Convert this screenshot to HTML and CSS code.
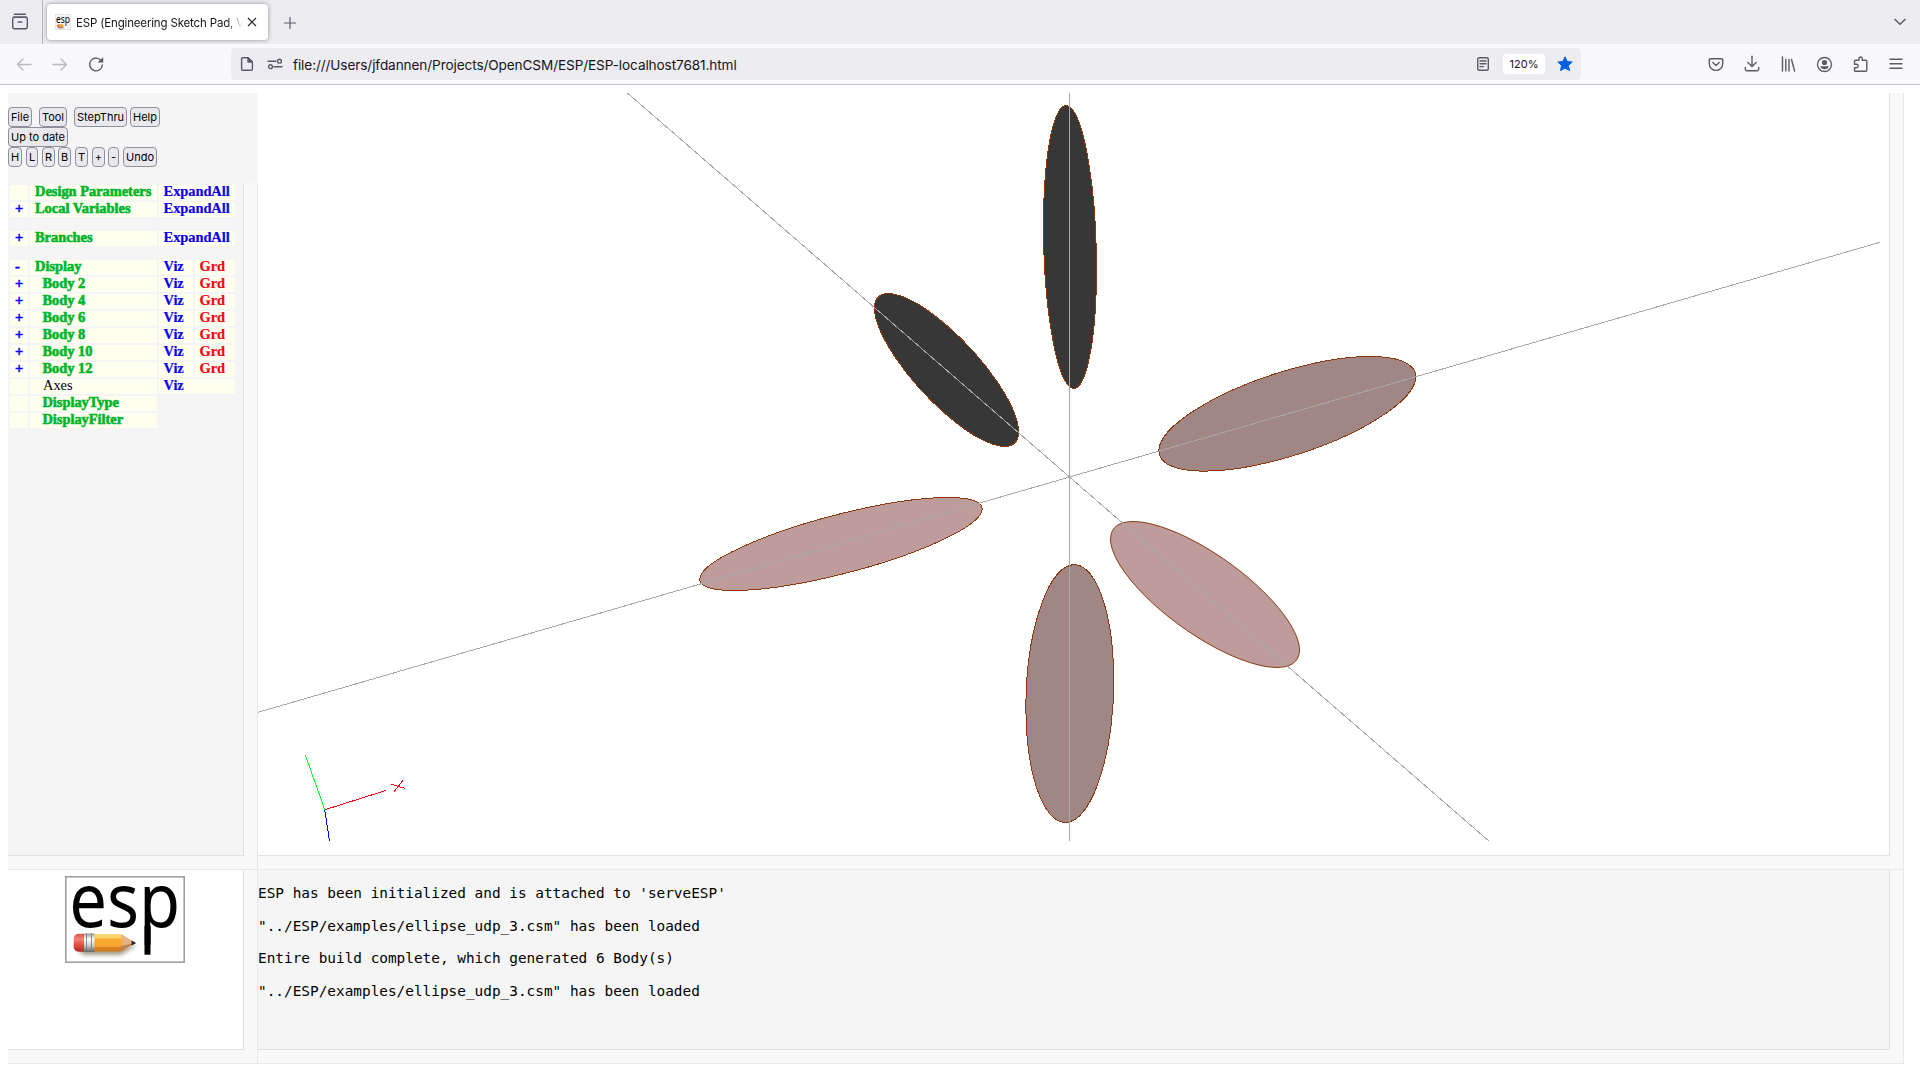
FILE: index.html
```html
<!DOCTYPE html>
<html lang="en">
<head>
<meta charset="utf-8">
<title>ESP (Engineering Sketch Pad, V1)</title>
<link rel="stylesheet" href="styles.css">
</head>
<body>
<header class="chrome">
  <div class="tabstrip">
    <div class="recent">
      <svg width="18" height="18" viewBox="0 0 18 18" class="ico"><path d="M3.4 1.2h11M2.6 4.2h12.8" /><rect x="1.7" y="4.2" width="14.6" height="11.6" rx="2"/><path d="M7.2 9h3.6"/></svg>
    </div>
    <div class="tab">
      <svg class="favicon" width="16" height="16" viewBox="0 0 16 16"><rect x=".5" y=".5" width="15" height="15" fill="#f4f4f4" stroke="#e4e4e4"/><text x="1" y="9" font-size="10.5" textLength="14" lengthAdjust="spacingAndGlyphs" class="logo-text">esp</text><path d="M2 11.8a3 2 0 0 1 2-1.5h3.500l1.500 1.500-1.500 1.700H4a3 2 0 0 1-2-1.700z" fill="#f0a22c"/><path d="M2 11.8a3 2 0 0 1 1.500-1.500v3A3 2 0 0 1 2 11.8z" fill="#e0503c"/><path d="M3 13.800h5.500" stroke="#8d6247"/></svg>
      <span class="tab-title">ESP (Engineering Sketch Pad, V1</span>
      <svg class="close" width="10" height="10" viewBox="0 0 10 10"><path d="M1 1l8 8M9 1L1 9"/></svg>
    </div>
    <svg class="plus" width="12" height="12" viewBox="0 0 12 12"><path d="M6 0v12M0 6h12"/></svg>
    <svg class="chev" width="12" height="8" viewBox="0 0 12 8"><path d="M.5 1L6 6.3 11.5 1"/></svg>
  </div>
  <div class="toolbar">
    <div class="nav">
      <span class="slot faded"><svg width="16" height="16" viewBox="0 0 16 16" class="ico"><path d="M15 8.5H1.5M7 3L1.5 8.5 7 14"/></svg></span>
      <span class="slot faded"><svg width="16" height="16" viewBox="0 0 16 16" class="ico"><path d="M1 8.5h13.500M9 3l5.500 5.500L9 14"/></svg></span>
      <span class="slot"><svg width="16" height="16" viewBox="0 0 16 16" class="ico"><path d="M13.4 5A6.400 6.400 0 1 0 14.400 9"/><path d="M15.200 1v5.600H9.600z" fill="#5b5b66" stroke="none"/></svg></span>
    </div>
    <div class="urlbar">
      <svg width="14" height="16" viewBox="0 0 14 16" class="ico page-ico"><path d="M8 1.700H2.600a1 1 0 0 0-1 1v10.600a1 1 0 0 0 1 1h8.800a1 1 0 0 0 1-1V6z"/><path d="M8 1.700V6h4.400z" fill="#5b5b66"/></svg>
      <svg width="14" height="12" viewBox="0 0 14 12" class="ico perm-ico"><path d="M0 3.200h8M6 8.700h8"/><circle cx="11.500" cy="3.200" r="1.900"/><circle cx="2.500" cy="8.700" r="1.900"/></svg>
      <span class="url">file:///Users/jfdannen/Projects/OpenCSM/ESP/ESP-localhost7681.html</span>
      <svg width="12" height="14" viewBox="0 0 12 14" class="ico reader"><rect x=".7" y=".7" width="10.600" height="12.600" rx="1.500"/><path d="M3 4h6M3 6.800h6M3 9.600h3.500"/></svg>
      <span class="zoom">120%</span>
      <svg width="16" height="16" viewBox="0 0 16 16" class="star"><path d="M8 .8l2.100 4.700 5.100.5-3.800 3.500 1.100 5.100L8 12l-4.500 2.600 1.100-5.100L.8 6l5.100-.5z"/></svg>
    </div>
    <div class="tools">
      <span class="slot"><svg width="16" height="16" viewBox="0 0 16 16" class="ico"><path d="M2.500 2.700h11a1.200 1.200 0 0 1 1.200 1.200v3.800a6.700 6.700 0 0 1-13.400 0V3.900a1.200 1.200 0 0 1 1.200-1.200z"/><path d="M4.800 6.500L8 9.500l3.200-3"/></svg></span>
      <span class="slot"><svg width="16" height="16" viewBox="0 0 16 16" class="ico"><path d="M8 .3v10M3.800 6.500L8 10.500l4.200-4M1.300 11.500v1.700a1.500 1.500 0 0 0 1.500 1.500h10.400a1.500 1.500 0 0 0 1.500-1.500v-1.700"/></svg></span>
      <span class="slot"><svg width="16" height="16" viewBox="0 0 16 16" class="ico"><path d="M2.500 1v14M5.800 3.500V15M9 3.500V15M11.500 3.500L14.600 15"/></svg></span>
      <span class="slot"><svg width="16" height="16" viewBox="0 0 16 16" class="ico"><circle cx="8.500" cy="8.500" r="7"/><circle cx="8.500" cy="6.500" r="2.600" fill="#5b5b66" stroke="none"/><path d="M4.200 10.300h8.600C12.500 12 10.800 13.300 8.500 13.300S4.500 12 4.200 10.300z" fill="#5b5b66" stroke="none"/></svg></span>
      <span class="slot"><svg width="16" height="16" viewBox="0 0 16 16" class="ico"><path d="M7 4.200V2.600a1.600 1.600 0 0 1 3.200 0v1.600h3.600a1 1 0 0 1 1 1v9a1 1 0 0 1-1 1H3.500a1 1 0 0 1-1-1v-2.500h2a1.500 1.500 0 0 0 0-3.400h-2V5.200a1 1 0 0 1 1-1z"/></svg></span>
      <span class="slot"><svg width="12" height="12" viewBox="0 0 12 12" class="ico"><path d="M0 1.300h12M0 5.700h12M0 10.200h12"/></svg></span>
    </div>
  </div>
</header>

<main class="frames">
  <section class="cell tree-cell">
    <div class="menus">
      <div class="brow"><button class="w24">File</button><button class="w28 g7">Tool</button><button class="w53 g7">StepThru</button><button class="w30 g3">Help</button></div>
      <div class="brow"><button class="w60">Up to date</button></div>
      <div class="brow"><button class="w14">H</button><button class="w12 g4">L</button><button class="w13 g4">R</button><button class="w13 g3">B</button><button class="w13 g4">T</button><button class="w13 g4">+</button><button class="w11 g3">-</button><button class="w34 g4">Undo</button></div>
    </div>
    <div class="pane tree">
      <div class="row"><i></i><b>Design Parameters</b><a class="wide">ExpandAll</a></div>
      <div class="row"><i>+</i><b>Local Variables</b><a class="wide">ExpandAll</a></div>
      <div class="row gap"><i>+</i><b>Branches</b><a class="wide">ExpandAll</a></div>
      <div class="row gap"><i>-</i><b>Display</b><a>Viz</a><u>Grd</u></div>
      <div class="row"><i>+</i><b class="in">Body 2</b><a>Viz</a><u>Grd</u></div>
      <div class="row"><i>+</i><b class="in">Body 4</b><a>Viz</a><u>Grd</u></div>
      <div class="row"><i>+</i><b class="in">Body 6</b><a>Viz</a><u>Grd</u></div>
      <div class="row"><i>+</i><b class="in">Body 8</b><a>Viz</a><u>Grd</u></div>
      <div class="row"><i>+</i><b class="in">Body 10</b><a>Viz</a><u>Grd</u></div>
      <div class="row"><i>+</i><b class="in">Body 12</b><a>Viz</a><u>Grd</u></div>
      <div class="row"><i></i><b class="in plain">Axes</b><a class="wide">Viz</a></div>
      <div class="row"><i></i><b class="in">DisplayType</b></div>
      <div class="row"><i></i><b class="in">DisplayFilter</b></div>
    </div>
  </section>

  <section class="cell">
    <div class="pane view">
      <svg class="scene" width="1631" height="762" viewBox="258 93 1631 762">
        <g class="bodies">
          <circle r="1" class="dark" transform="matrix(26.5 21 0 139.930 1070 247)"/>
          <circle r="1" class="mauve" transform="matrix(128.500 -37.100 0 43.670 1287.300 413.800)"/>
          <circle r="1" class="dark" transform="matrix(72 62 0 44.800 946.500 370)"/>
          <circle r="1" class="pink" transform="matrix(141.300 -35.200 0 30.400 841 544)"/>
          <circle r="1" class="mauve" transform="matrix(43.900 -13.300 0 128.200 1069.800 693.600)"/>
          <circle r="1" class="pink" transform="matrix(94.500 55.500 0 47.400 1205 594.500)"/>
        </g>
        <g class="axes">
          <path d="M1069.500 93V841"/>
          <path d="M258 712.300L1069.500 477 1880 242.300"/>
          <path d="M627.500 93L1069.500 477 1488.500 840.700"/>
        </g>
        <g class="triad">
          <path d="M324.700 809.500L305.300 755" stroke="#00ff2b"/>
          <path d="M325 809.700L386 790.400M391.300 784.300L405 788.400M393.500 792.500L403 780.300" stroke="#ff0019"/>
          <path d="M324.700 810L329.500 841" stroke="#0000ff"/>
        </g>
      </svg>
    </div>
  </section>

  <section class="cell">
    <div class="pane logo">
      <svg width="120" height="87" viewBox="0 0 120 87">
        <defs>
          <linearGradient id="wood" x2="0" y2="1"><stop offset="0" stop-color="#fbd66c"/><stop offset=".25" stop-color="#fbd66c"/><stop offset=".26" stop-color="#f6ad32"/><stop offset=".75" stop-color="#f3a42f"/><stop offset=".76" stop-color="#dd8520"/><stop offset="1" stop-color="#c97918"/></linearGradient>
          <linearGradient id="rubber" x2="0" y2="1"><stop offset="0" stop-color="#d9534a"/><stop offset=".3" stop-color="#f58174"/><stop offset=".6" stop-color="#e84e42"/><stop offset="1" stop-color="#a92d27"/></linearGradient>
          <linearGradient id="metal" x2="0" y2="1"><stop offset="0" stop-color="#999"/><stop offset=".3" stop-color="#fff"/><stop offset=".65" stop-color="#ccc"/><stop offset="1" stop-color="#666"/></linearGradient>
          <filter id="soft" x="-20%" y="-50%" width="140%" height="200%"><feGaussianBlur stdDeviation="2"/></filter>
        </defs>
        <rect x=".8" y=".8" width="118.400" height="85.400" fill="#fff" stroke="#9ba1a5" stroke-width="1.600"/>
        <text class="logo-text" font-size="74" x="4.200" y="51" textLength="111" lengthAdjust="spacingAndGlyphs">esp</text>
        <rect x="79.500" y="50" width="6" height="28.700"/>
        <path d="M10 70l8 9h38l16-10z" fill="#6b5a40" opacity=".6" filter="url(#soft)"/>
        <path d="M29 58h26.500L70 67 56 75.500H29z" fill="url(#wood)"/>
        <path d="M56 58l14.500 9L55 75.800c1-3 2.600-5.600 1.500-8.600 1.600-3-.5-6-.5-9.200z" fill="#e6b283"/>
        <path d="M56 70l14-3L55 75.800z" fill="#bd824e"/>
        <path d="M66.500 64.500l4.700 2.500-4.700 2.700z" fill="#282828"/>
        <rect x="8.700" y="57.800" width="14" height="18" rx="5" fill="url(#rubber)"/>
        <rect x="19" y="57.500" width="10.500" height="18.500" fill="url(#metal)"/>
        <path d="M21.500 57.500v18.500M26.500 57.500v18.500" stroke="#777" stroke-width=".8"/>
      </svg>
    </div>
  </section>

  <section class="cell">
    <div class="pane console">
      <p>ESP has been initialized and is attached to 'serveESP'</p>
      <p>"../ESP/examples/ellipse_udp_3.csm" has been loaded</p>
      <p>Entire build complete, which generated 6 Body(s)</p>
      <p>"../ESP/examples/ellipse_udp_3.csm" has been loaded</p>
    </div>
  </section>
</main>
</body>
</html>
```
FILE: styles.css
```css
* { box-sizing: border-box; }
body { margin: 0; width: 1920px; height: 1080px; overflow: hidden; background: #fff; font-family: Inter, sans-serif; color: #15141a; }
svg { display: block; flex: none; overflow: visible; }
.ico { fill: none; stroke: #5b5b66; stroke-width: 1.4; stroke-linecap: round; stroke-linejoin: round; }

/* browser chrome */
.tabstrip { display: flex; align-items: center; height: 44px; background: #edecf1; }
.recent { display: flex; align-items: center; width: 43px; height: 44px; padding-left: 11px; border-right: 1px solid #b4b3bb; }
.tab { display: flex; align-items: center; width: 221px; height: 36px; margin-left: 4px; padding-left: 8px; border-radius: 4px; background: #fff; box-shadow: 0 0 4px rgba(0, 0, 0, .4); }
.tab-title { width: 167px; margin-left: 5px; padding-top: 2px; overflow: hidden; white-space: nowrap; font-size: 11.5px; line-height: 16px; letter-spacing: -.16px; -webkit-mask-image: linear-gradient(to left, transparent 0, #000 16px); mask-image: linear-gradient(to left, transparent 0, #000 16px); }
.close { margin-left: 4px; margin-bottom: 1px; fill: none; stroke: #2b2a33; stroke-width: 1.2; }
.plus { margin-left: 16px; margin-top: 1px; fill: none; stroke: #5b5b66; stroke-width: 1.2; }
.chev { margin-left: auto; margin-right: 14px; fill: none; stroke: #5b5b66; stroke-width: 1.4; }
.toolbar { display: flex; align-items: center; height: 41px; background: #f9f9fb; border-bottom: 1px solid #c2c1c8; }
.nav { display: flex; padding-left: 6px; width: 231px; }
.slot { display: flex; align-items: center; justify-content: center; width: 36px; height: 32px; }
.faded { opacity: .4; }
.urlbar { display: flex; align-items: center; width: 1350px; height: 32px; padding-left: 9px; border-radius: 4px; background: #edecf1; }
.perm-ico { margin-left: 14px; }
.url { margin-left: 11px; padding-top: 2px; font-size: 13.6px; line-height: 18px; letter-spacing: -.1px; }
.reader { margin-left: auto; }
.zoom { width: 42px; height: 20px; margin-left: 14px; border-radius: 3px; background: #fff; text-align: center; font-size: 11px; line-height: 21px; }
.star { margin: 0 8px 0 12px; fill: #0060df; stroke: #0060df; stroke-linejoin: round; }
.tools { display: flex; margin-left: auto; padding-right: 6px; }

/* page frames */
.frames { display: grid; grid-template-columns: 250px 1646px; grid-template-rows: 777px 194px; padding: 8px; }
.cell { display: flex; flex-direction: column; padding: 0 13px 13px 0; background: #f9f9f9; border-right: 1px solid #e8e8e8; border-bottom: 1px solid #e8e8e8; }
.pane { flex: 1; min-height: 0; background: #f5f5f5; border-right: 1px solid #e1e1e1; border-bottom: 1px solid #e1e1e1; }

.menus { width: 250px; height: 90px; padding-top: 14px; background: #f5f5f5; }
.brow { display: flex; height: 20px; }
button { height: 20px; padding: 0; border: 1px solid #8f8f9d; border-radius: 4px; background: #e9e9ed; color: #000; font: 11px/19px Inter, sans-serif; white-space: nowrap; }
.w11 { width: 11px; } .w12 { width: 12px; } .w13 { width: 13px; } .w14 { width: 14px; }
.w24 { width: 24px; } .w28 { width: 28px; } .w30 { width: 30px; } .w34 { width: 34px; }
.w53 { width: 53px; } .w60 { width: 60px; }
.g3 { margin-left: 3px; } .g4 { margin-left: 4px; } .g7 { margin-left: 7px; }

.tree { padding: 2px 0 0 2px; font: bold 14.4px/13px "Liberation Serif", serif; }
.row { display: grid; grid-template-columns: 18px 127px 34px 40px; gap: 2px; height: 15px; margin-bottom: 2px; white-space: nowrap; }
.row.gap { margin-top: 14px; }
.row > * { background: #fffff0; padding-left: 5px; font-style: normal; text-decoration: none; }
.row > i, .row > a { color: #0a00f5; -webkit-text-stroke: .2px #0a00f5; }
.row > i { -webkit-text-stroke-width: .5px; }
.row > a { padding-left: 4.600px; letter-spacing: -.04px; }
.row > b { color: #00b52a; -webkit-text-stroke: .6px #00b52a; }
.row > u { padding-left: 4.600px; color: #fa0014; -webkit-text-stroke: .2px #fa0014; letter-spacing: -.1px; }
.row > b.in { padding-left: 12.4px; }
.row > b.plain { padding-left: 13px; color: #000; font-weight: normal; -webkit-text-stroke: 0; }
.row > .wide { grid-column: 3 / 5; }

.view { background: #fff; }
.scene { shape-rendering: crispEdges; overflow: hidden; }
.bodies circle { stroke: #8b3a10; stroke-width: 1px; vector-effect: non-scaling-stroke; }
.dark { fill: #373737; }
.mauve { fill: #a18686; }
.pink { fill: #be9c9c; }
.axes { fill: none; stroke: #a8a8a8; }
.triad { fill: none; }

.logo { padding: 6px 0 0 57px; background: #fff; }
.logo-text { font-family: "Noto Sans", sans-serif; fill: #000; }
.console { padding-top: 15px; font: 14.4px/17px "DejaVu Sans Mono", monospace; color: #000; }
.console p { margin: 0 0 16px; white-space: pre; }
.console p:nth-child(2n) { margin-bottom: 15px; }
```
